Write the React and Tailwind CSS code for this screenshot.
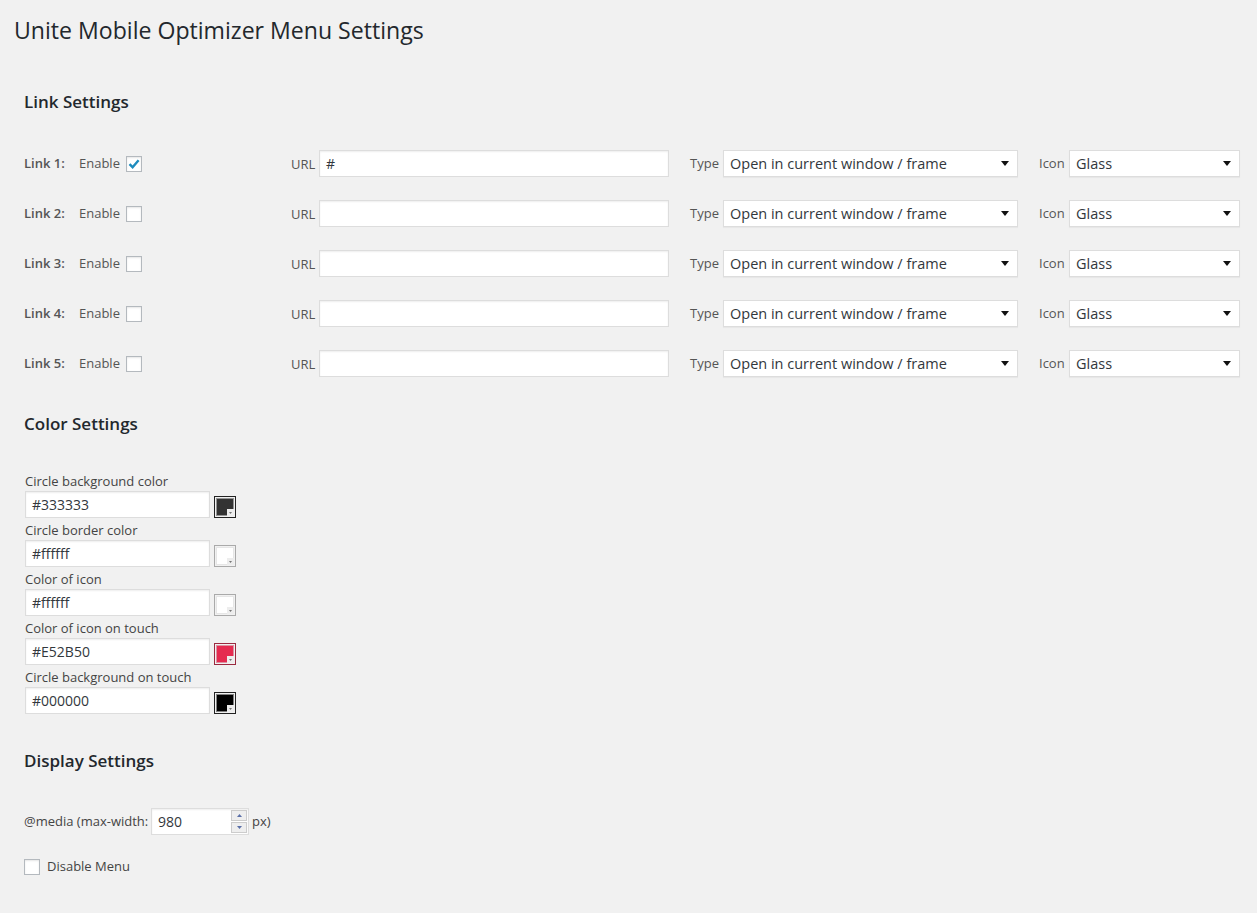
const LINKS = [1, 2, 3, 4, 5];

const COLORS = [
  { label: "Circle background color", value: "#333333", fill: "#333333", border: "#222222" },
  { label: "Circle border color", value: "#ffffff", fill: "#ffffff", border: "#aaaaaa" },
  { label: "Color of icon", value: "#ffffff", fill: "#ffffff", border: "#aaaaaa" },
  { label: "Color of icon on touch", value: "#E52B50", fill: "#E52B50", border: "#9b2a40" },
  { label: "Circle background on touch", value: "#000000", fill: "#000000", border: "#222222" },
];

function Checkbox({ checked }) {
  return (
    <div className="w-4 h-4 bg-white border border-[#b4b9be] shadow-[inset_0_1px_2px_rgba(0,0,0,0.1)] flex items-center justify-center shrink-0">
      {checked && (
        <svg width="14" height="14" viewBox="0 0 14 14">
          <path d="M2.5 7.2 L5.6 10.2 L11.6 3.2" fill="none" stroke="#1e8cbe" strokeWidth="2.4" strokeLinejoin="miter" />
        </svg>
      )}
    </div>
  );
}

function TextBox({ value, className }) {
  return (
    <div
      className={`h-[27px] bg-white border border-[#ddd] shadow-[inset_0_1px_2px_rgba(0,0,0,0.07)] flex items-center pl-[6px] text-[14px] text-[#32373c] ${className}`}
    >
      {value}
    </div>
  );
}

function Select({ value, className }) {
  return (
    <div
      className={`h-[27px] bg-white border border-[#ddd] shadow-[0_1px_1px_rgba(0,0,0,0.04)] flex items-center justify-between pl-[6px] pr-[8px] text-[14.5px] text-[#32373c] ${className}`}
    >
      <span>{value}</span>
      <svg width="8" height="5" viewBox="0 0 8 5">
        <path d="M0 0 H8 L4 5 Z" fill="#111" />
      </svg>
    </div>
  );
}

function Swatch({ fill, border }) {
  return (
    <div className="w-[22px] h-[22px] p-[1px] border shrink-0" style={{ borderColor: border }}>
      <div className="relative w-full h-full border border-[#d5d5d5]/60" style={{ backgroundColor: fill }}>
        <div className="absolute right-[-1px] bottom-[-1px] w-[7px] h-[7px] bg-[#ededed] flex items-center justify-center">
          <svg width="3" height="2" viewBox="0 0 3 2">
            <path d="M0 0 H3 L1.5 2 Z" fill="#777" />
          </svg>
        </div>
      </div>
    </div>
  );
}

function SectionTitle({ children, className }) {
  return (
    <h2 className={`text-[17px] leading-[20px] font-semibold text-[#23282d] ${className}`}>
      {children}
    </h2>
  );
}

export default function App() {
  return (
    <div
      className="min-h-[913px] w-full bg-[#f1f1f1] text-[#444] text-[13px]"
      style={{ fontFamily: '"Open Sans", "Liberation Sans", sans-serif' }}
    >
      <h1 className="pl-[14px] pt-[16px] text-[23.1px] leading-[29px] text-[#23282d] font-normal">
        Unite Mobile Optimizer Menu Settings
      </h1>

      <div className="pl-[24px]">
        {/* Link Settings */}
        <SectionTitle className="mt-[47px]">Link Settings</SectionTitle>
        <div className="mt-[38px] flex flex-col gap-[23px]">
          {LINKS.map((n) => (
            <div key={n} className="flex items-center h-[27px]">
              <div className="w-[267px] flex items-center">
                <span className="w-[55px] font-semibold text-[#555]">Link {n}:</span>
                <span className="text-[#555]">Enable</span>
                <div className="ml-[6px]">
                  <Checkbox checked={n === 1} />
                </div>
              </div>
              <span className="w-[28px] pt-[3px] text-[#555]">URL</span>
              <TextBox value={n === 1 ? "#" : ""} className="w-[350px]" />
              <span className="ml-[21px] w-[33px] text-[#555]">Type</span>
              <Select value="Open in current window / frame" className="w-[295px]" />
              <span className="ml-[21px] w-[30px] text-[#555]">Icon</span>
              <Select value="Glass" className="w-[171px]" />
            </div>
          ))}
        </div>

        {/* Color Settings */}
        <SectionTitle className="mt-[37px]">Color Settings</SectionTitle>
        <div className="mt-[38px] pl-[1px] flex flex-col gap-[3px]">
          {COLORS.map((c) => (
            <div key={c.label}>
              <div className="leading-[18px]">{c.label}</div>
              <div className="mt-[1px] flex items-end gap-[4px]">
                <TextBox value={c.value} className="w-[185px]" />
                <Swatch fill={c.fill} border={c.border} />
              </div>
            </div>
          ))}
        </div>

        {/* Display Settings */}
        <SectionTitle className="mt-[37px]">Display Settings</SectionTitle>
        <div className="mt-[37px] flex items-center h-[27px]">
          <span className="w-[127px]">@media (max-width:</span>
          <div className="w-[98px] h-[27px] bg-white border border-[#ddd] shadow-[inset_0_1px_2px_rgba(0,0,0,0.07)] flex items-center justify-between pl-[6px] pr-[1px] text-[14px] text-[#32373c]">
            <span>980</span>
            <div className="flex flex-col gap-[1px] py-[1px] h-full w-[16px]">
              <div className="flex-1 bg-[#eee] border border-[#ccc] flex items-center justify-center">
                <svg width="5" height="3" viewBox="0 0 5 3">
                  <path d="M0 3 H5 L2.5 0 Z" fill="#5a6fa8" />
                </svg>
              </div>
              <div className="flex-1 bg-[#eee] border border-[#ccc] flex items-center justify-center">
                <svg width="5" height="3" viewBox="0 0 5 3">
                  <path d="M0 0 H5 L2.5 3 Z" fill="#5a6fa8" />
                </svg>
              </div>
            </div>
          </div>
          <span className="ml-[3px]">px)</span>
        </div>

        <div className="mt-[22px] flex items-center gap-[7px]">
          <Checkbox checked={false} />
          <span>Disable Menu</span>
        </div>
      </div>
    </div>
  );
}
